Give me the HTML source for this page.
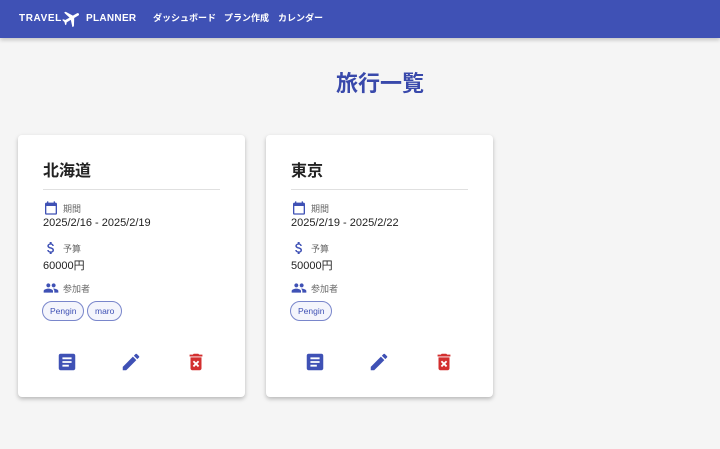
<!DOCTYPE html>
<html><head><meta charset="utf-8"><style>
*{margin:0;padding:0;box-sizing:border-box}
body{width:720px;height:449px;background:#f5f5f5;font-family:"Liberation Sans","Noto Sans CJK JP",sans-serif;position:relative;overflow:hidden}
.hdr{position:absolute;left:0;top:0;width:720px;height:38px;background:#3f51b5;box-shadow:0 2px 4px rgba(0,0,0,.2)}
.lg{position:absolute;top:13px;color:#fff;font-weight:bold;font-size:10px;white-space:nowrap}
.nav{position:absolute;top:11px;color:#fff;font-size:9px;font-weight:bold;white-space:nowrap}
h1{position:absolute;left:0;width:760px;text-align:center;top:66px;font-size:22px;color:#3949ab;font-weight:bold}
.card{position:absolute;top:135px;width:227px;height:262px;background:#fff;border-radius:4px;box-shadow:0 2px 4px rgba(0,0,0,.25)}
.t{position:absolute;left:25px;top:22px;font-size:16px;font-weight:bold;color:#222}
.hr{position:absolute;left:25px;top:54px;width:177px;height:1px;background:#e0e0e0}
.ic{position:absolute;left:25px}
.lb{position:absolute;left:45px;font-size:9px;color:#666}
.v{position:absolute;left:25px;font-size:11px;color:#222}
.chip{position:absolute;top:166px;height:20px;border:1px solid #7986cb;border-radius:10px;font-size:8.5px;color:#3f51b5;line-height:18px;padding:0 7px;background:#f4f5fc}
.b{position:absolute;top:216px}
</style></head><body>
<div class="hdr">
<div class="lg" style="left:19px;letter-spacing:.6px">TRAVEL</div>
<svg style="position:absolute;left:61px;top:8px" width="21" height="21" viewBox="0 0 24 24"><path fill="#fff" d="M21 16v-2l-8-5V3.5C13 2.7 12.3 2 11.5 2S10 2.7 10 3.5V9l-8 5v2l8-2.5V19l-2 1.5V22l3.5-1 3.5 1v-1.5L13 19v-5.5z" transform="rotate(60 12 12)"/></svg>
<div class="lg" style="left:86px;letter-spacing:.3px">PLANNER</div>
<div class="nav" style="left:153px">ダッシュボード</div>
<div class="nav" style="left:224px">プラン作成</div>
<div class="nav" style="left:278px">カレンダー</div>
</div>
<h1>旅行一覧</h1>

<div class="card" style="left:18px">
<div class="t">北海道</div><div class="hr"></div>
<svg class="ic" style="top:65px" width="16" height="16" viewBox="0 0 24 24"><path fill="#3f51b5" d="M19 4h-1V2h-2v2H8V2H6v2H5c-1.1 0-2 .9-2 2v14c0 1.1.9 2 2 2h14c1.1 0 2-.9 2-2V6c0-1.1-.9-2-2-2zm0 16H5V9h14v11z"/></svg>
<div class="lb" style="top:67px">期間</div>
<div class="v" style="top:82px">2025/2/16 - 2025/2/19</div>
<svg class="ic" style="top:105px" width="16" height="16" viewBox="0 0 24 24"><path fill="#3f51b5" d="M11.8 10.9c-2.27-.59-3-1.2-3-2.15 0-1.09 1.01-1.85 2.7-1.85 1.78 0 2.44.85 2.5 2.1h2.21c-.07-1.72-1.12-3.3-3.21-3.81V3h-3v2.16c-1.94.42-3.5 1.68-3.5 3.61 0 2.31 1.91 3.46 4.7 4.13 2.5.6 3 1.48 3 2.41 0 .69-.49 1.79-2.7 1.79-2.06 0-2.87-.92-2.98-2.1h-2.2c.12 2.19 1.76 3.42 3.68 3.83V21h3v-2.15c1.95-.37 3.5-1.5 3.5-3.55 0-2.84-2.43-3.81-4.7-4.4z"/></svg>
<div class="lb" style="top:107px">予算</div>
<div class="v" style="top:122px">60000円</div>
<svg class="ic" style="top:145px" width="16" height="16" viewBox="0 0 24 24"><path fill="#3f51b5" d="M16 11c1.66 0 2.99-1.34 2.99-3S17.66 5 16 5c-1.66 0-3 1.34-3 3s1.34 3 3 3zm-8 0c1.66 0 2.99-1.34 2.99-3S9.66 5 8 5C6.34 5 5 6.34 5 8s1.34 3 3 3zm0 2c-2.33 0-7 1.17-7 3.5V19h14v-2.5c0-2.33-4.67-3.5-7-3.5zm8 0c-.29 0-.62.02-.97.05 1.16.84 1.97 1.97 1.97 3.45V19h6v-2.5c0-2.33-4.67-3.5-7-3.5z"/></svg>
<div class="lb" style="top:147px">参加者</div>
<div class="chip" style="left:24px">Pengin</div>
<div class="chip" style="left:69px">maro</div>
<svg class="b" style="left:38px" width="22" height="22" viewBox="0 0 24 24"><path fill="#3f51b5" d="M19 3H5c-1.1 0-2 .9-2 2v14c0 1.1.9 2 2 2h14c1.1 0 2-.9 2-2V5c0-1.1-.9-2-2-2zm-5 14H7v-2h7v2zm3-4H7v-2h10v2zm0-4H7V7h10v2z"/></svg>
<svg class="b" style="left:102px" width="22" height="22" viewBox="0 0 24 24"><path fill="#3f51b5" d="M3 17.25V21h3.75L17.81 9.94l-3.75-3.75L3 17.25zM20.71 7.04a1 1 0 000-1.41l-2.34-2.34a1 1 0 00-1.41 0l-1.83 1.83 3.75 3.75 1.83-1.83z"/></svg>
<svg class="b" style="left:167px" width="22" height="22" viewBox="0 0 24 24"><path fill="#d32f2f" d="M6 19c0 1.1.9 2 2 2h8c1.1 0 2-.9 2-2V7H6v12zm2.46-7.12l1.41-1.41L12 12.59l2.12-2.12 1.41 1.41L13.41 14l2.12 2.12-1.41 1.41L12 15.41l-2.12 2.12-1.41-1.41L10.59 14l-2.13-2.12zM15.5 4l-1-1h-5l-1 1H5v2h14V4z"/></svg>
</div>

<div class="card" style="left:266px">
<div class="t">東京</div><div class="hr"></div>
<svg class="ic" style="top:65px" width="16" height="16" viewBox="0 0 24 24"><path fill="#3f51b5" d="M19 4h-1V2h-2v2H8V2H6v2H5c-1.1 0-2 .9-2 2v14c0 1.1.9 2 2 2h14c1.1 0 2-.9 2-2V6c0-1.1-.9-2-2-2zm0 16H5V9h14v11z"/></svg>
<div class="lb" style="top:67px">期間</div>
<div class="v" style="top:82px">2025/2/19 - 2025/2/22</div>
<svg class="ic" style="top:105px" width="16" height="16" viewBox="0 0 24 24"><path fill="#3f51b5" d="M11.8 10.9c-2.27-.59-3-1.2-3-2.15 0-1.09 1.01-1.85 2.7-1.85 1.78 0 2.44.85 2.5 2.1h2.21c-.07-1.72-1.12-3.3-3.21-3.81V3h-3v2.16c-1.94.42-3.5 1.68-3.5 3.61 0 2.31 1.91 3.46 4.7 4.13 2.5.6 3 1.48 3 2.41 0 .69-.49 1.79-2.7 1.79-2.06 0-2.87-.92-2.98-2.1h-2.2c.12 2.19 1.76 3.42 3.68 3.83V21h3v-2.15c1.95-.37 3.5-1.5 3.5-3.55 0-2.84-2.43-3.81-4.7-4.4z"/></svg>
<div class="lb" style="top:107px">予算</div>
<div class="v" style="top:122px">50000円</div>
<svg class="ic" style="top:145px" width="16" height="16" viewBox="0 0 24 24"><path fill="#3f51b5" d="M16 11c1.66 0 2.99-1.34 2.99-3S17.66 5 16 5c-1.66 0-3 1.34-3 3s1.34 3 3 3zm-8 0c1.66 0 2.99-1.34 2.99-3S9.66 5 8 5C6.34 5 5 6.34 5 8s1.34 3 3 3zm0 2c-2.33 0-7 1.17-7 3.5V19h14v-2.5c0-2.33-4.67-3.5-7-3.5zm8 0c-.29 0-.62.02-.97.05 1.16.84 1.97 1.97 1.97 3.45V19h6v-2.5c0-2.33-4.67-3.5-7-3.5z"/></svg>
<div class="lb" style="top:147px">参加者</div>
<div class="chip" style="left:24px">Pengin</div>
<svg class="b" style="left:38px" width="22" height="22" viewBox="0 0 24 24"><path fill="#3f51b5" d="M19 3H5c-1.1 0-2 .9-2 2v14c0 1.1.9 2 2 2h14c1.1 0 2-.9 2-2V5c0-1.1-.9-2-2-2zm-5 14H7v-2h7v2zm3-4H7v-2h10v2zm0-4H7V7h10v2z"/></svg>
<svg class="b" style="left:102px" width="22" height="22" viewBox="0 0 24 24"><path fill="#3f51b5" d="M3 17.25V21h3.75L17.81 9.94l-3.75-3.75L3 17.25zM20.71 7.04a1 1 0 000-1.41l-2.34-2.34a1 1 0 00-1.41 0l-1.83 1.83 3.75 3.75 1.83-1.83z"/></svg>
<svg class="b" style="left:167px" width="22" height="22" viewBox="0 0 24 24"><path fill="#d32f2f" d="M6 19c0 1.1.9 2 2 2h8c1.1 0 2-.9 2-2V7H6v12zm2.46-7.12l1.41-1.41L12 12.59l2.12-2.12 1.41 1.41L13.41 14l2.12 2.12-1.41 1.41L12 15.41l-2.12 2.12-1.41-1.41L10.59 14l-2.13-2.12zM15.5 4l-1-1h-5l-1 1H5v2h14V4z"/></svg>
</div>
</body></html>
